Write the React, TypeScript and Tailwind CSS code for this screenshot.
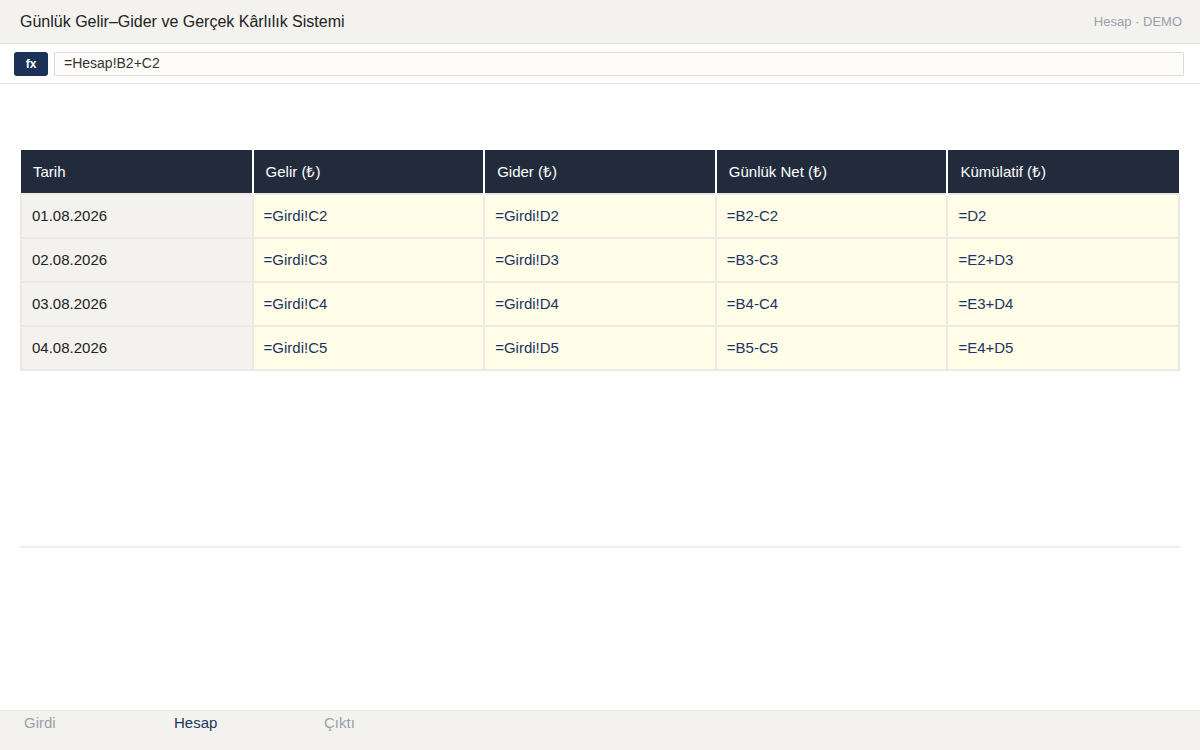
import React from 'react';

const COLS = ['Tarih', 'Gelir (₺)', 'Gider (₺)', 'Günlük Net (₺)', 'Kümülatif (₺)'];

const ROWS = [
  ['01.08.2026', '=Girdi!C2', '=Girdi!D2', '=B2-C2', '=D2'],
  ['02.08.2026', '=Girdi!C3', '=Girdi!D3', '=B3-C3', '=E2+D3'],
  ['03.08.2026', '=Girdi!C4', '=Girdi!D4', '=B4-C4', '=E3+D4'],
  ['04.08.2026', '=Girdi!C5', '=Girdi!D5', '=B5-C5', '=E4+D5'],
];

const TABS = [
  { name: 'Girdi', active: false },
  { name: 'Hesap', active: true },
  { name: 'Çıktı', active: false },
];

export default function App() {
  return (
    <div className="w-[1200px] h-[750px] bg-white flex flex-col font-['Liberation_Sans',Arial,sans-serif] text-[#222]">
      {/* Header */}
      <div className="h-[44px] bg-[#f3f2ee] border-b border-[#e6e3de] flex items-center justify-between px-5 shrink-0">
        <h1 className="text-[16px] text-[#222]">Günlük Gelir–Gider ve Gerçek Kârlılık Sistemi</h1>
        <span className="text-[13px] text-[#9aa0ab] -mr-[2px]">Hesap · DEMO</span>
      </div>

      {/* Formula bar */}
      <div className="h-[40px] border-b border-[#e6e3de] flex items-center gap-[6px] pl-[14px] pr-4 shrink-0">
        <div className="w-[34px] h-[24px] bg-[#1b3157] rounded-[3px] flex items-center justify-center text-white text-[12px] font-bold">
          fx
        </div>
        <div className="flex-1 h-[24px] bg-[#fdfcfa] border border-[#dedad4] rounded-[2px] flex items-center px-[9px] text-[14px] text-[#333]">
          =Hesap!B2+C2
        </div>
      </div>

      {/* Content */}
      <div className="flex-1 px-5 pt-[66px]">
        <table className="w-full border-collapse table-fixed">
          <thead>
            <tr className="h-[44px]">
              {COLS.map((c, i) => (
                <th
                  key={c}
                  className={`bg-[#212b3b] text-white text-[15px] font-normal text-left pl-3 pr-3 pt-[2px] border-b border-[#c9c7c2] ${i < COLS.length - 1 ? 'border-r-2 border-r-white' : ''}`}
                >
                  {c}
                </th>
              ))}
            </tr>
          </thead>
          <tbody>
            {ROWS.map((row) => (
              <tr key={row[0]} className="h-[44px]">
                {row.map((cell, i) => (
                  <td
                    key={i}
                    className={`px-[10px] text-[15px] border-2 border-[#ebe9e4] ${i === 0 ? 'bg-[#f3f2ee] text-[#222]' : 'bg-[#fffce8] text-[#1b3461]'}`}
                  >
                    {cell}
                  </td>
                ))}
              </tr>
            ))}
          </tbody>
        </table>

        <div className="mt-[175px] h-[2px] bg-[#efeeea]" />
      </div>

      {/* Sheet tabs */}
      <div className="h-[40px] bg-[#f3f2ee] border-t border-[#e8e4df] flex shrink-0">
        {TABS.map((t) => (
          <div
            key={t.name}
            className={`w-[150px] pl-6 pt-[1px] text-[15px] ${t.active ? 'text-[#1b3461]' : 'text-[#9aa0ab]'}`}
          >
            {t.name}
          </div>
        ))}
      </div>
    </div>
  );
}
